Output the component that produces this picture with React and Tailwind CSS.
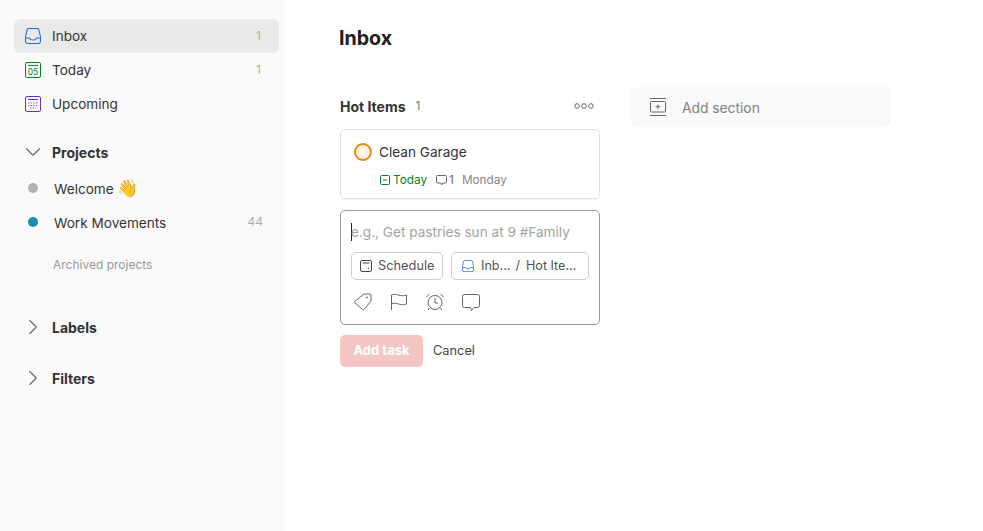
import { ChevronDown, ChevronRight } from 'lucide-react';

function InboxIcon({ className }) {
    return (
        <svg className={className} viewBox="0 0 16 16" fill="none" stroke="#246fe0" strokeWidth="1.100">
            <path d="M3.600 .5h8.800a1.500 1.500 0 0 1 1.400 1.100l1.700 7.100v4.300a2.500 2.500 0 0 1-2.500 2.500H3a2.500 2.500 0 0 1-2.500-2.500V8.700l1.700-7.100A1.500 1.500 0 0 1 3.600 .5z" />
            <path d="M1 10h3.200l1.500 1.300c.6.5 1.300.7 2.300.7s1.700-.2 2.300-.7l1.500-1.300H15" />
        </svg>
    );
}

function TodayIcon() {
    return (
        <svg className="w-4 h-4" viewBox="0 0 16 16" fill="none">
            <rect x=".5" y=".5" width="15" height="15" rx="1.500" stroke="#058527" />
            <path d="M3 3.500h10" stroke="#058527" />
            <text x="8" y="13" textAnchor="middle" fontSize="8.500" fill="#058527" fontFamily="Inter, sans-serif">05</text>
        </svg>
    );
}

function UpcomingIcon() {
    return (
        <svg className="w-4 h-4" viewBox="0 0 16 16" fill="none">
            <rect x=".5" y=".5" width="15" height="15" rx="1.500" stroke="#692fc2" />
            <path d="M3 3.500h10" stroke="#692fc2" />
            <path d="M3 7h10M3 9.500h10M5 12h6" stroke="#692fc2" strokeOpacity="0.800" strokeWidth="1.200" strokeDasharray="1.400 1.200" />
        </svg>
    );
}

function NavRow({ icon, label, count, active }) {
    return (
        <div className={`flex items-center h-[34px] pl-[11px] pr-[18px] rounded-md ${active ? 'bg-[#e9e9e9]' : ''}`}>
            {icon}
            <span className="ml-[11px] text-[13.6px] text-[#333] flex-1">{label}</span>
            {count && <span className="text-[12px] text-[#aaa]">{count}</span>}
        </div>
    );
}

function GroupHeader({ label, open }) {
    const Icon = open ? ChevronDown : ChevronRight;
    return (
        <div className="flex items-center h-[34px] pl-[6px]">
            <Icon size={26} strokeWidth={1} className="text-[#666]" />
            <span className="ml-[6px] text-[14px] font-bold text-[#333]">{label}</span>
        </div>
    );
}

function ProjectRow({ color, label, emoji, count }) {
    return (
        <div className="flex items-center h-[34px] pl-[14px] pr-[16px]">
            <span className={`w-[10px] h-[10px] rounded-full ${color}`} />
            <span className="ml-[16px] pt-[2px] text-[13.6px] text-[#333] flex-1">
                {label}
                {emoji && <span className="ml-[3px] text-[17px] leading-[18px]">{emoji}</span>}
            </span>
            {count && <span className="text-[12px] text-[#aaa]">{count}</span>}
        </div>
    );
}

function Sidebar() {
    return (
        <aside className="w-[284px] shrink-0 bg-[#fafafa] pt-[19px] pl-[14px] pr-[5px]">
            <NavRow active label="Inbox" count="1" icon={<InboxIcon className="w-4 h-4" />} />
            <NavRow label="Today" count="1" icon={<TodayIcon />} />
            <NavRow label="Upcoming" icon={<UpcomingIcon />} />
            <div className="mt-[14px]">
                <GroupHeader label="Projects" open />
            </div>
            <div className="mt-[2px]">
                <ProjectRow color="bg-[#b3b3b3]" label="Welcome" emoji="👋" />
                <ProjectRow color="bg-[#158fad]" label="Work Movements" count="44" />
            </div>
            <div className="pl-[39px] mt-[17px] text-[12px] leading-[18px] text-[#999]">Archived projects</div>
            <div className="mt-[36px]">
                <GroupHeader label="Labels" />
            </div>
            <div className="mt-[17px]">
                <GroupHeader label="Filters" />
            </div>
        </aside>
    );
}

function TaskCard() {
    return (
        <div className="mt-[11px] h-[70px] border border-[#e0e0e0] rounded-[5px] pl-[13px] pt-[13px] shadow-[0_1px_2px_rgba(0,0,0,0.04)]">
            <div className="flex items-center">
                <span className="w-[18px] h-[18px] rounded-full border-2 border-[#eb8909] bg-[#fdf3e7]" />
                <span className="ml-[7px] text-[13.6px] leading-[18px] text-[#333]">Clean Garage</span>
            </div>
            <div className="flex items-center mt-[11px] ml-[26px] text-[11.8px] leading-[16px]">
                <svg className="w-[10px] h-[10px]" viewBox="0 0 10 10" fill="none" stroke="#058527">
                    <rect x=".5" y=".5" width="9" height="9" rx="1" />
                    <path d="M3 5h4" />
                </svg>
                <span className="ml-[3px] text-[#058527]">Today</span>
                <svg className="w-[11px] h-[11px] ml-[9px]" viewBox="0 0 11 11" fill="none" stroke="#666">
                    <path d="M1.500 .5h8a1 1 0 0 1 1 1v5.500a1 1 0 0 1-1 1H7l-1.500 2-.5-2H1.500a1 1 0 0 1-1-1V1.500a1 1 0 0 1 1-1z" />
                </svg>
                <span className="ml-[2px] text-[#666]">1</span>
                <span className="ml-[8px] text-[#888]">Monday</span>
            </div>
        </div>
    );
}

function TaskEditor() {
    return (
        <div className="mt-[11px] h-[115px] border border-[#999] rounded-[5px] px-[10px] pt-[11px]">
            <div className="flex items-center h-[20px] text-[13.6px] text-[#a3a3a3]">
                <span className="w-px h-[18px] bg-[#222]" />
                <span className="-ml-px">e.g., Get pastries sun at 9 #Family</span>
            </div>
            <div className="flex items-center gap-2 mt-[10px]">
                <div className="flex items-center h-[28px] w-[92px] border border-[#ccc] rounded-[5px] pl-2 text-[12.8px] text-[#555]">
                    <svg className="w-3 h-3 shrink-0" viewBox="0 0 12 12" fill="none" stroke="#444">
                        <rect x=".5" y=".5" width="11" height="11" rx="1.500" />
                        <path d="M2.500 3h7" />
                        <circle cx="8.500" cy="8.500" r=".4" />
                    </svg>
                    <span className="ml-[6px]">Schedule</span>
                </div>
                <div className="flex items-center h-[28px] w-[138px] border border-[#ccc] rounded-[5px] pl-[10px] text-[12.6px] text-[#555]">
                    <InboxIcon className="w-3 h-3 shrink-0" />
                    <span className="ml-[7px]">Inb...</span>
                    <span className="ml-[5px]">/</span>
                    <span className="ml-[6px]">Hot Ite...</span>
                </div>
            </div>
            <div className="flex items-center mt-[12px] pl-[3px]">
                <svg className="w-[18px] h-[18px]" viewBox="0 0 18 18" fill="none" stroke="#666">
                    <path d="M10 1h6a1 1 0 0 1 1 1v6l-7 8.500a1 1 0 0 1-1.400.1L1 9.800a1 1 0 0 1-.1-1.400z" />
                    <circle cx="13" cy="4.500" r=".6" />
                </svg>
                <svg className="w-[18px] h-[18px] ml-[18px]" viewBox="0 0 18 18" fill="none" stroke="#666">
                    <path d="M1.500 17V2c2-1 4-1 7 0s5 1 8 0v9c-3 1-5 1-8 0s-5-1-7 0" />
                </svg>
                <svg className="w-[20px] h-[20px] ml-[17px]" viewBox="0 0 20 20" fill="none" stroke="#666">
                    <circle cx="10" cy="10.500" r="7" />
                    <path d="M10 6v5h3M1.500 5l3-3M18.500 5l-3-3M4.500 16l-1.500 2M15.500 16l1.500 2" />
                </svg>
                <svg className="w-[18px] h-[18px] ml-[17px]" viewBox="0 0 18 18" fill="none" stroke="#666">
                    <path d="M2.500 1.500h13a2 2 0 0 1 2 2v9a2 2 0 0 1-2 2H12l-2.500 3-1-3H2.500a2 2 0 0 1-2-2v-9a2 2 0 0 1 2-2z" />
                </svg>
            </div>
        </div>
    );
}

export default function App() {
    return (
        <div className="flex h-[531px] w-[983px] overflow-hidden bg-white font-['Inter',sans-serif]">
            <Sidebar />
            <main className="flex-1 pl-[55px] pt-[26px]">
                <h1 className="text-[19.600px] leading-[24px] font-bold text-[#202020]">Inbox</h1>
                <div className="flex mt-[44px]">
                    <section className="w-[260px] ml-px">
                        <div className="flex items-center h-[24px] pr-[6px]">
                            <span className="text-[14px] font-bold text-[#333]">Hot Items</span>
                            <span className="ml-[10px] text-[12px] text-[#777]">1</span>
                            <svg className="ml-auto w-5 h-[6px]" viewBox="0 0 20 6" fill="none" stroke="#666">
                                <circle cx="3" cy="3" r="2.300" />
                                <circle cx="10" cy="3" r="2.300" />
                                <circle cx="17" cy="3" r="2.300" />
                            </svg>
                        </div>
                        <TaskCard />
                        <TaskEditor />
                        <div className="flex items-center mt-[10px]">
                            <button className="w-[83px] h-[32px] rounded-[5px] bg-[#f4c6c3] text-[13px] font-bold text-white">Add task</button>
                            <button className="ml-[10px] text-[12.800px] text-[#444]">Cancel</button>
                        </div>
                    </section>
                    <div className="ml-[31px] -mt-[7px] w-[260px] h-[40px] rounded-[5px] bg-[#f9f9f9] flex items-center pl-[19px] self-start">
                        <svg className="w-4 h-[18px]" viewBox="0 0 16 18" fill="none" stroke="#666">
                            <path d="M0 .5h16M0 17.500h16" />
                            <rect x=".5" y="3.500" width="15" height="10.500" rx="1" />
                            <path d="M8 6.500v4.500M5.700 8.700h4.600" />
                        </svg>
                        <span className="ml-[16px] pt-[2px] text-[13.800px] text-[#808080]">Add section</span>
                    </div>
                </div>
            </main>
        </div>
    );
}
